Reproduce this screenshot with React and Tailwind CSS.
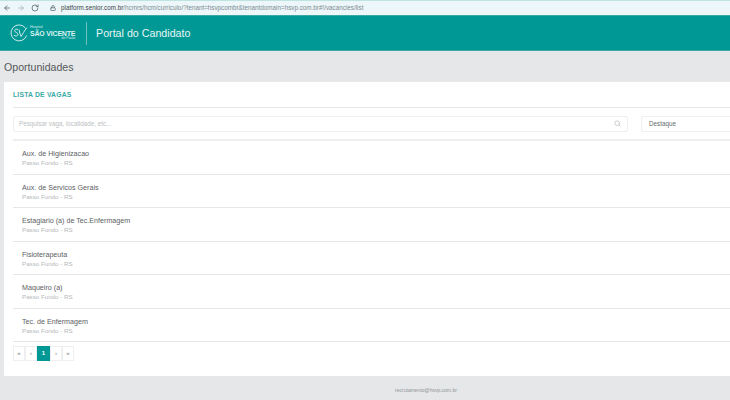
import React from 'react';
import { ArrowLeft, ArrowRight, RotateCw, Lock, Search } from 'lucide-react';

const vagas = [
    'Aux. de Higienizacao',
    'Aux. de Servicos Gerais',
    'Estagiario (a) de Tec.Enfermagem',
    'Fisioterapeuta',
    'Maqueiro (a)',
    'Tec. de Enfermagem',
];

const paginas = [
    { label: '«' },
    { label: '‹' },
    { label: '1', active: true },
    { label: '›' },
    { label: '»' },
];

function App() {
    return (
        <div className="flex flex-col h-[400px] w-[730px] overflow-hidden bg-[#e6e7e8] font-['Liberation_Sans',sans-serif]">
            <div className="h-[15px] flex items-center bg-[#edf7fa] border-t border-[#bfe3e0] shrink-0">
                <div className="flex items-center gap-[6px] pl-[3px] text-[#5f6b70]">
                    <ArrowLeft size={8} strokeWidth={2.5} />
                    <ArrowRight size={8} strokeWidth={2.5} className="text-[#a9b4b8]" />
                    <RotateCw size={8} strokeWidth={2.5} />
                </div>
                <Lock size={6} strokeWidth={3} className="ml-[11px] text-[#5f6b70]" />
                <div className="ml-[5px] text-[6.3px] leading-none whitespace-nowrap text-[#7c8a90]">
                    <span className="text-[#3c4449]">platform.senior.com.br</span>/hcmrs/hcm/curriculo/?tenant=hsvpcombr&amp;tenantdomain=hsvp.com.br#!/vacancies/list
                </div>
            </div>

            <header className="h-[36px] flex items-center bg-[#009895] border-y border-[#3aa8a5] shrink-0 text-white">
                <div className="flex items-center pl-[10px] w-[86px] shrink-0">
                    <svg width="18" height="18" viewBox="0 0 18 18" fill="none" stroke="#cfeceb" strokeWidth="1">
                        <path d="M15.5 4.2A8 8 0 1 0 16.6 11.5" />
                        <path d="M8 5.5C6.5 4.7 4.5 5.2 4.6 6.7C4.7 8.6 8 8.3 8 10.4C8 12 5.6 12.4 4 11.4" />
                        <path d="M9 5.5C9.5 8 10 10 11 12.5C12.5 10.5 14 7 17 3.5" />
                    </svg>
                    <div className="ml-[2px] flex flex-col items-end text-[#d8f0ef] leading-none">
                        <span className="self-start text-[3.5px]">Hospital</span>
                        <span className="text-[7px] font-bold whitespace-nowrap tracking-[-0.2px]">SÃO VICENTE</span>
                        <span className="text-[3.5px]">de Paulo</span>
                    </div>
                </div>
                <div className="h-[23px] w-px bg-[#6fc0be]" />
                <div className="ml-[9px] text-[10.7px] text-[#e6f5f4]">Portal do Candidato</div>
            </header>

            <main className="flex-1 min-h-0 flex flex-col pl-[4px]">
                <h1 className="h-[31px] pt-[2px] flex items-center text-[10.6px] text-[#55595c] shrink-0">Oportunidades</h1>

                <section className="h-[294px] bg-white shrink-0 pl-[9px] flex flex-col">
                    <h2 className="h-[26px] pt-[1px] flex items-center text-[6.8px] font-bold tracking-[0.2px] text-[#3aa9a6] border-b border-[#e4e6e7] shrink-0">
                        LISTA DE VAGAS
                    </h2>

                    <div className="h-[33px] flex items-center gap-[13px] border-b-2 border-[#eeeff0] shrink-0">
                        <div className="w-[615px] h-[16px] flex items-center justify-between px-[5px] border border-[#eeeff0] rounded-[2px] text-[6.3px] text-[#bcc0c2]">
                            <span>Pesquisar vaga, localidade, etc...</span>
                            <Search size={7} strokeWidth={2.5} className="text-[#b9bdbf] mr-[1px]" />
                        </div>
                        <div className="flex-1 h-[16px] flex items-center px-[7px] border border-[#eeeff0] rounded-l-[2px] border-r-0 text-[6.3px] text-[#666b6e]">
                            Destaque
                        </div>
                    </div>

                    <ul className="shrink-0">
                        {vagas.map((vaga) => (
                            <li key={vaga} className="h-[33.5px] pl-[9px] pt-[9px] border-b border-[#e4e6e7]">
                                <div className="text-[7.15px] leading-[9px] text-[#5c6063]">{vaga}</div>
                                <div className="text-[6.2px] leading-[8px] text-[#b4b8ba]">Passo Fundo - RS</div>
                            </li>
                        ))}
                    </ul>

                    <div className="flex mt-[4px] shrink-0">
                        {paginas.map((p) => (
                            <div
                                key={p.label}
                                className={`h-[15px] flex items-center justify-center text-[6px] font-bold border ${
                                    p.active ? 'w-[13px] bg-[#009895] border-[#009895] text-white' : 'w-[12px] border-[#eeeff0] text-[#9a9ea0]'
                                }`}
                            >
                                {p.label}
                            </div>
                        ))}
                    </div>
                </section>

                <footer className="flex-1 flex items-center justify-center pl-[118px] pt-[6px] text-[5px] text-[#909497]">
                    recrutamento@hsvp.com.br
                </footer>
            </main>
        </div>
    );
}

export default App;
